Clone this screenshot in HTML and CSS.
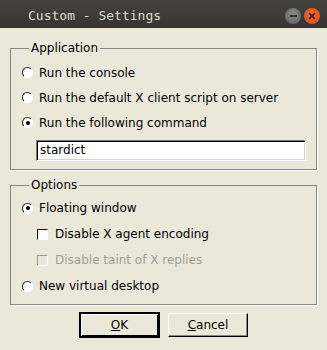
FILE: index.html
```html
<!DOCTYPE html>
<html lang="en">
<head>
    <meta charset="UTF-8">
    <title>Custom - Settings</title>
    <link rel="stylesheet" href="styles.css">
</head>
<body>
    <div class="titlebar">
        <span class="title">Custom - Settings</span>
        <div class="win-buttons">
            <span class="win-btn minimize"><span class="dash"></span></span>
            <span class="win-btn close">
                <svg width="8" height="8" viewBox="0 0 8 8"><path d="M1 1L7 7M7 1L1 7" stroke="#3a1a0c" stroke-width="1.5"/></svg>
            </span>
        </div>
    </div>

    <div class="content">
        <fieldset class="group app-group">
            <legend>Application</legend>
            <div class="row"><span class="radio"></span>Run the console</div>
            <div class="row"><span class="radio"></span>Run the default X client script on server</div>
            <div class="row"><span class="radio checked"></span>Run the following command</div>
            <div class="entry">stardict</div>
        </fieldset>

        <fieldset class="group options-group">
            <legend>Options</legend>
            <div class="row"><span class="radio checked"></span>Floating window</div>
            <div class="row sub"><span class="check"></span>Disable X agent encoding</div>
            <div class="row sub disabled"><span class="check"></span>Disable taint of X replies</div>
            <div class="row"><span class="radio"></span>New virtual desktop</div>
        </fieldset>

        <div class="actions">
            <button class="btn default"><u>O</u>K</button>
            <button class="btn"><u>C</u>ancel</button>
        </div>
    </div>
</body>
</html>
```

FILE: styles.css
```css
body {
    margin: 0;
    width: 327px;
    height: 350px;
    background-color: #ebe8da;
    font-family: "DejaVu Sans", sans-serif;
    font-size: 12px;
    color: #000;
    overflow: hidden;
}
.titlebar {
    height: 28px;
    display: flex;
    align-items: center;
    justify-content: space-between;
    background: linear-gradient(#45443f, #35342f);
    padding: 0 7px 0 28px;
}
.title {
    font-family: "DejaVu Sans Mono", monospace;
    font-size: 13px;
    color: #dfdbd2;
    padding-top: 2px;
}
.win-buttons {
    display: flex;
    gap: 3px;
    padding-top: 4px;
}
.win-btn {
    width: 16px;
    height: 16px;
    border-radius: 50%;
    display: flex;
    align-items: center;
    justify-content: center;
}
.minimize {
    background: radial-gradient(circle at 50% 40%, #8a8a86, #5e5e5a);
}
.minimize .dash {
    width: 7px;
    height: 1.5px;
    background-color: #2f2f2c;
}
.close {
    background: radial-gradient(circle at 50% 40%, #f26a35, #d4491a);
}
.content {
    padding: 13px 10px 0 10px;
}
.group {
    margin: 0;
    padding: 5px 10px 8px 11px;
    border: 1px solid #888880;
    box-shadow: 1px 1px 0 #fff;
    box-sizing: border-box;
    width: 307px;
}
.group legend {
    padding: 0 2px;
    margin-left: 7px;
    line-height: 14px;
}
.app-group {
    padding-bottom: 8px;
}
.options-group {
    margin-top: 8px;
    padding-top: 3px;
    padding-bottom: 5px;
}
.row {
    display: flex;
    align-items: center;
    height: 25px;
}
.options-group .row {
    height: 26px;
}
.row.sub {
    padding-left: 15px;
}
.row.disabled {
    color: #a09e96;
}
.radio {
    width: 11px;
    height: 11px;
    border-radius: 50%;
    box-sizing: border-box;
    border: 1px solid;
    border-color: #222 #fff #fff #222;
    background-color: #fff;
    margin-right: 6px;
    display: flex;
    align-items: center;
    justify-content: center;
}
.radio.checked::after {
    content: "";
    width: 4px;
    height: 4px;
    border-radius: 50%;
    background-color: #000;
}
.check {
    width: 11px;
    height: 11px;
    box-sizing: border-box;
    border: 1px solid;
    border-color: #111 #fff #fff #111;
    background-color: #fff;
    margin-right: 7px;
}
.disabled .check {
    border-color: #9a9890 #fff #fff #9a9890;
    background-color: #ebe8da;
}
.entry {
    margin: 5px 0 0 14px;
    width: 270px;
    height: 21px;
    box-sizing: border-box;
    background-color: #fff;
    border: 1px solid;
    border-color: #7a7a74 #fff #fff #7a7a74;
    box-shadow: inset 1px 1px 0 #000, inset -1px -1px 0 #d8d5c8;
    padding: 2px 3px;
    line-height: 15px;
}
.actions {
    display: flex;
    justify-content: center;
    align-items: center;
    gap: 8px;
    margin-top: 7px;
}
.btn {
    width: 80px;
    height: 24px;
    font-family: "DejaVu Sans", sans-serif;
    font-size: 12px;
    background-color: #ebe8da;
    border: 1px solid;
    border-color: #fff #000 #000 #fff;
    box-shadow: inset -1px -1px 0 #8a8880;
    padding: 0;
    color: #000;
}
.btn.default {
    width: 81px;
    height: 26px;
    border: 2px solid #000;
    box-shadow: inset 1px 1px 0 #fff, inset -1px -1px 0 #000;
}
```
